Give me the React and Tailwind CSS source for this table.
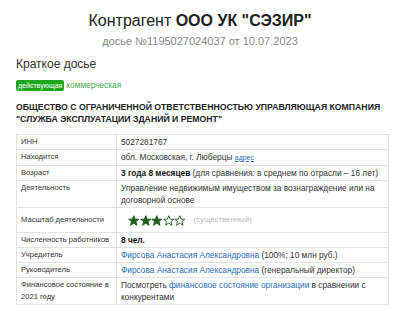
import React from 'react'

const rows = [
  { label: 'ИНН', value: <span>5027281767</span> },
  {
    label: 'Находится',
    value: (
      <span>
        обл. Московская, г. Люберцы{' '}
        <span className="text-[7px] text-[#2a6db5] border-b border-dashed border-[#2a6db5]">адрес</span>
      </span>
    ),
  },
  {
    label: 'Возраст',
    value: (
      <span>
        <b className="text-[#111]">3 года 8 месяцев</b> (для сравнения: в среднем по отрасли – 16 лет)
      </span>
    ),
  },
  { label: 'Деятельность', value: <span>Управление недвижимым имуществом за вознаграждение или на договорной основе</span> },
  { label: 'Масштаб деятельности', value: 'stars' },
  { label: 'Численность работников', value: <b className="text-[#111]">8 чел.</b> },
  {
    label: 'Учредитель',
    value: (
      <span>
        <span className="text-[#2a6db5]">Фирсова Анастасия Александровна</span> (100%; 10 млн руб.)
      </span>
    ),
  },
  {
    label: 'Руководитель',
    value: (
      <span>
        <span className="text-[#2a6db5]">Фирсова Анастасия Александровна</span> (генеральный директор)
      </span>
    ),
  },
  {
    label: 'Финансовое состояние в 2021 году',
    value: (
      <span>
        Посмотреть <span className="text-[#2a6db5]">финансовое состояние организации</span> в сравнении с конкурентами
      </span>
    ),
  },
]

function Star({ filled }) {
  return (
    <svg width="11.5" height="11" viewBox="0 0 24 24">
      <polygon
        points="12,1.5 15,9 23,9.3 16.8,14.3 19,22.5 12,17.8 5,22.5 7.2,14.3 1,9.3 9,9"
        fill={filled ? '#1f5c1f' : '#fff'}
        stroke="#1f5c1f"
        strokeWidth="2"
        strokeLinejoin="round"
      />
    </svg>
  )
}

function App() {
  return (
    <div className="w-[400px] h-[311px] overflow-hidden bg-white font-['Liberation_Sans',Arial,sans-serif] text-[#333]">
      <div className="pt-[10px] text-center">
        <div className="text-[16px] leading-[21px] text-[#222]">
          Контрагент <b>ООО УК "СЭЗИР"</b>
        </div>
        <div className="mt-[2px] text-[11px] leading-[16px] text-[#888]">досье №1195027024037 от 10.07.2023</div>
      </div>

      <div className="pl-[16px] pr-[11px]">
        <div className="mt-[7px] text-[12px] leading-[16px] text-[#333]">Краткое досье</div>

        <div className="mt-[8px] flex items-center gap-[2px]">
          <span className="h-[11px] px-[2px] rounded-[2px] bg-[#1ea51e] text-white text-[7px] leading-[11px]">действующая</span>
          <span className="text-[8.3px] leading-[11px] text-[#3bae4a]">коммерческая</span>
        </div>

        <div className="mt-[10px] text-[8.7px] leading-[12px] font-bold text-[#222] uppercase">
          Общество с ограниченной ответственностью управляющая компания "Служба эксплуатации зданий и ремонт"
        </div>

        <table className="mt-[9px] w-[373px] border-collapse text-[8.3px] leading-[12px] text-[#333]">
          <tbody>
            {rows.map(row => {
              const stars = row.value === 'stars'
              return (
                <tr key={row.label}>
                  <td
                    className={
                      stars
                        ? 'w-[100px] border border-[#e3e3e3] px-[4px] py-[1px] align-middle text-[7.6px]'
                        : 'w-[100px] border border-[#e3e3e3] px-[4px] py-[1px] align-top text-[7.6px]'
                    }
                  >
                    {row.label}
                  </td>
                  <td className="border border-[#e3e3e3] px-[4px] py-[1px] align-top">
                    {stars ? (
                      <div className="flex items-center py-[5px] pl-[7px]">
                        <Star filled />
                        <Star filled />
                        <Star filled />
                        <Star />
                        <Star />
                        <span className="ml-[8px] text-[#bbb] text-[7.8px]">(существенный)</span>
                      </div>
                    ) : (
                      row.value
                    )}
                  </td>
                </tr>
              )
            })}
          </tbody>
        </table>
      </div>
    </div>
  )
}

export default App
